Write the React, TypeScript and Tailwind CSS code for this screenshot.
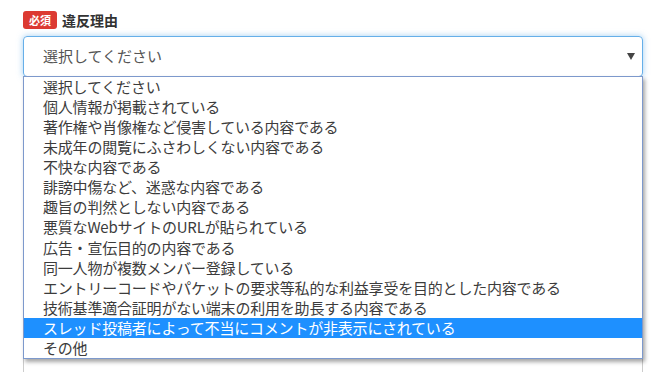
import React from "react";

const reasons = [
  "選択してください",
  "個人情報が掲載されている",
  "著作権や肖像権など侵害している内容である",
  "未成年の閲覧にふさわしくない内容である",
  "不快な内容である",
  "誹謗中傷など、迷惑な内容である",
  "趣旨の判然としない内容である",
  "悪質なWebサイトのURLが貼られている",
  "広告・宣伝目的の内容である",
  "同一人物が複数メンバー登録している",
  "エントリーコードやパケットの要求等私的な利益享受を目的とした内容である",
  "技術基準適合証明がない端末の利用を助長する内容である",
  "スレッド投稿者によって不当にコメントが非表示にされている",
  "その他",
];

const highlighted = 12;

const App: React.FC = () => {
  return (
    <div
      className="h-screen overflow-hidden bg-white pl-[23px] pt-[11px]"
      style={{ fontFamily: '"Noto Sans CJK JP", "Noto Sans", sans-serif' }}
    >
      <div className="w-[620px]">
        {/* Label row */}
        <div className="flex h-[18px] items-center gap-[5px]">
          <span className="flex h-[18px] w-[34px] items-center justify-center rounded-[3px] bg-[#dc3a32] text-[11px] font-bold text-white">
            必須
          </span>
          <span className="text-[14px] font-bold text-[#333]">違反理由</span>
        </div>

        {/* Select + open list */}
        <div className="relative mt-[7px]">
          <div className="flex h-[41px] items-center rounded-[4px] border border-[#66afe9] pl-[19px] pr-[6px] text-[15px] text-[#555] shadow-[0_0_6px_rgba(102,175,233,0.6)]">
            <span className="flex-1">選択してください</span>
            <svg width="8" height="7" viewBox="0 0 8 7" className="mr-[1px]">
              <polygon points="0,0 8,0 4,7" fill="#444" />
            </svg>
          </div>
          <ul className="absolute left-0 top-[40px] z-10 w-[620px] border border-[#7d99cc] bg-white shadow-[2px_3px_4px_rgba(0,0,0,0.35)]">
            {reasons.map((r, i) => (
              <li
                key={r}
                className={`flex h-[20.1px] items-center whitespace-nowrap pl-[19px] text-[15px] tracking-[-0.2px] ${
                  i === highlighted ? "bg-[#1e90ff] text-white" : "text-[#3c3c3c]"
                }`}
              >
                {r}
              </li>
            ))}
          </ul>
        </div>

        {/* Next field, hidden under the list */}
        <div className="mt-[24px] h-[290px] rounded-[4px] border border-[#ccc]" />
      </div>
    </div>
  );
};

export default App;
